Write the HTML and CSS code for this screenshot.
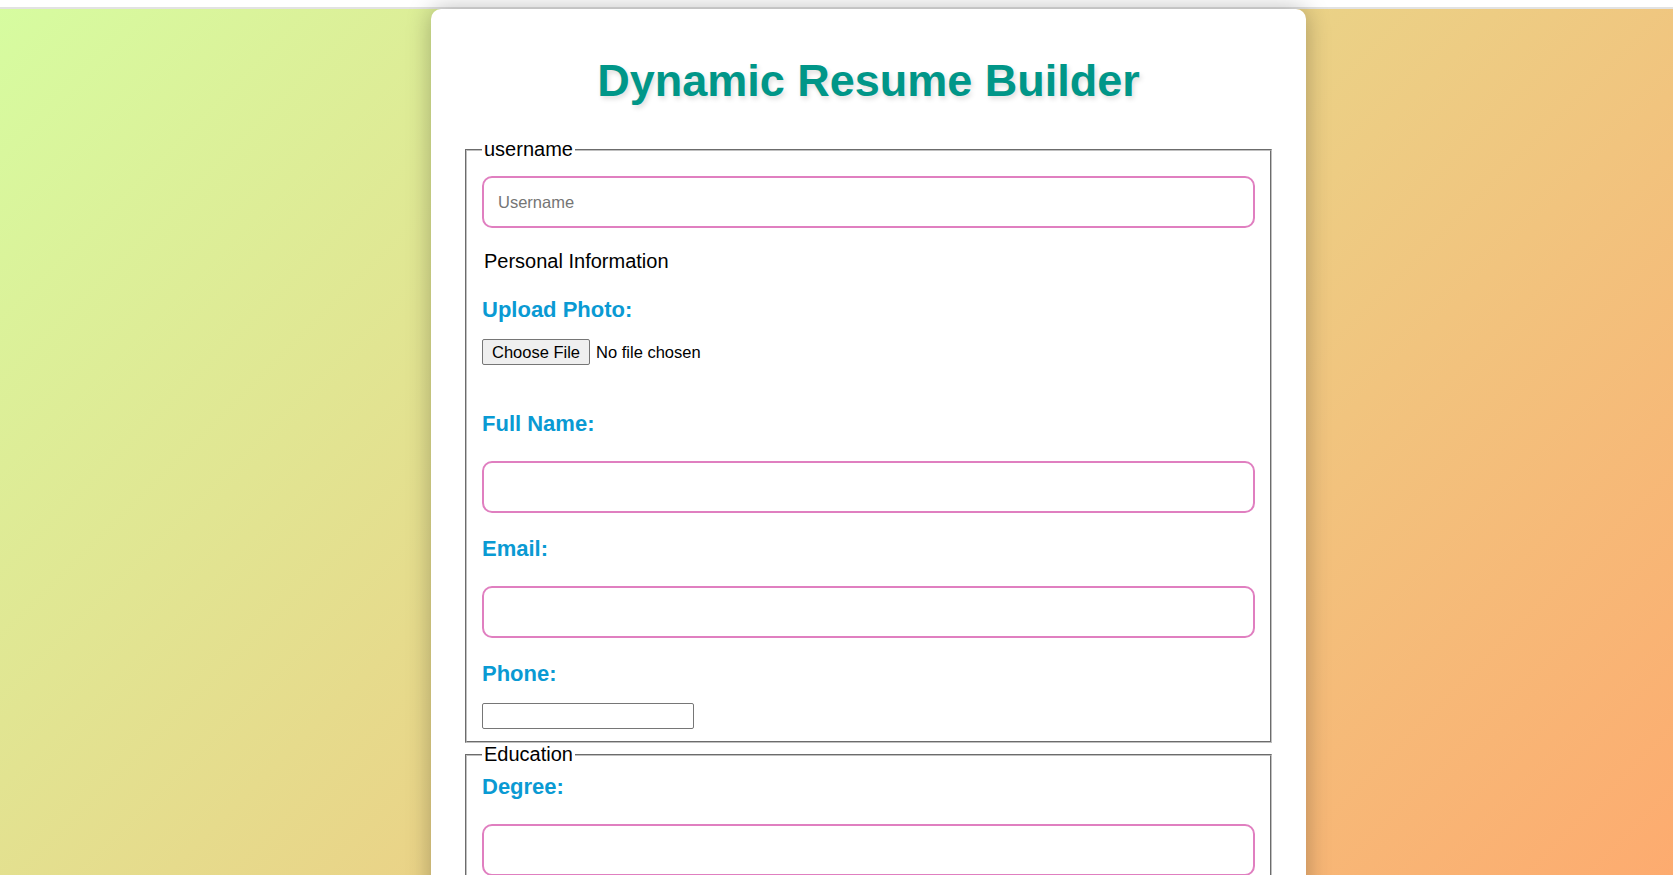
FILE: index.html
```html
<!DOCTYPE html>
<html lang="en">
<head>
<meta charset="utf-8">
<title>Dynamic Resume Builder</title>
<link rel="stylesheet" href="styles.css">
</head>
<body>
<div class="topbar"></div>
<main class="page">
  <div class="card">
    <h1 class="title">Dynamic Resume Builder</h1>
    <form class="form">
      <fieldset class="group">
        <legend class="legend">username</legend>
        <input class="field field-first" type="text" placeholder="Username">
        <div class="section-title">Personal Information</div>
        <label class="label label-upload" for="photo">Upload Photo:</label>
        <input class="file" id="photo" type="file" accept="image/*">
        <label class="label label-gap" for="name">Full Name:</label>
        <input class="field" id="name" type="text">
        <label class="label" for="email">Email:</label>
        <input class="field" id="email" type="email">
        <label class="label" for="phone">Phone:</label>
        <input class="plain" id="phone" type="tel">
      </fieldset>
      <fieldset class="group">
        <legend class="legend">Education</legend>
        <label class="label label-top" for="degree">Degree:</label>
        <input class="field" id="degree" type="text">
        <label class="label" for="school">Institution:</label>
        <input class="field" id="school" type="text">
        <label class="label" for="year">Year:</label>
        <input class="field" id="year" type="text">
      </fieldset>
    </form>
  </div>
</main>
</body>
</html>
```

FILE: styles.css
```css
html {
  background: #ffffff;
  scrollbar-width: none;
}
html::-webkit-scrollbar {
  display: none;
}
body {
  margin: 0;
  font-family: "Liberation Sans", Arial, sans-serif;
  color: #000;
}
.topbar {
  height: 7px;
  background: #ffffff;
  border-bottom: 2px solid #e2e2e2;
}
.page {
  min-height: 866px;
  background: linear-gradient(135deg, #d6fca0 0%, #fdab6f 100%);
  background-attachment: fixed;
  padding-left: 431px;
  padding-bottom: 40px;
}
.card {
  width: 875px;
  box-sizing: border-box;
  background: #ffffff;
  border-radius: 10px;
  padding: 32px 32px 32px;
  box-shadow: 0 0 24px rgba(0, 0, 0, 0.28);
}
.title {
  margin: 14px 0 31px;
  font-size: 45px;
  line-height: 52px;
  font-weight: 700;
  text-align: center;
  color: #009688;
  text-shadow: 2px 3px 5px rgba(0, 0, 0, 0.13);
}
.form {
  margin: 0;
}
.group {
  margin: 0 2px;
  padding: 0 15px 12px;
  border: 2px groove rgb(192, 192, 192);
}
.legend {
  padding: 0 2px;
  font-size: 20px;
  line-height: 23px;
}
.field {
  display: block;
  box-sizing: border-box;
  width: 100%;
  height: 52px;
  margin: 25px 0 0;
  padding: 0 14px;
  border: 2px solid #e07fc0;
  border-radius: 10px;
  font-family: "Liberation Sans", Arial, sans-serif;
  font-size: 16.5px;
  background: #fff;
  outline: none;
}
.field::placeholder {
  color: #757575;
}
.field-first {
  margin-top: 15px;
}
.section-title {
  margin-top: 22px;
  padding-left: 2px;
  font-size: 20px;
  line-height: 23px;
}
.label {
  display: block;
  margin-top: 23px;
  font-size: 22px;
  line-height: 25px;
  font-weight: 700;
  color: #0a9ad3;
}
.label-upload {
  margin-top: 24px;
}
.label-gap {
  margin-top: 46px;
}
.label-top {
  margin-top: 8px;
}
.file {
  display: block;
  margin-top: 17px;
  height: 26px;
  font-family: "Liberation Sans", Arial, sans-serif;
  font-size: 16.5px;
}
.file::file-selector-button {
  height: 26px;
  padding: 1px 9px;
  margin-right: 6px;
  font-family: "Liberation Sans", Arial, sans-serif;
  font-size: 16.5px;
  border: 1px solid #767676;
  border-radius: 2px;
  background: #efefef;
  color: #000;
}
.plain {
  display: block;
  box-sizing: border-box;
  width: 212px;
  height: 26px;
  margin-top: 17px;
  padding: 1px 3px;
  border: 1px solid #767676;
  border-radius: 2px;
  font-family: "Liberation Sans", Arial, sans-serif;
  font-size: 16.5px;
}
```
